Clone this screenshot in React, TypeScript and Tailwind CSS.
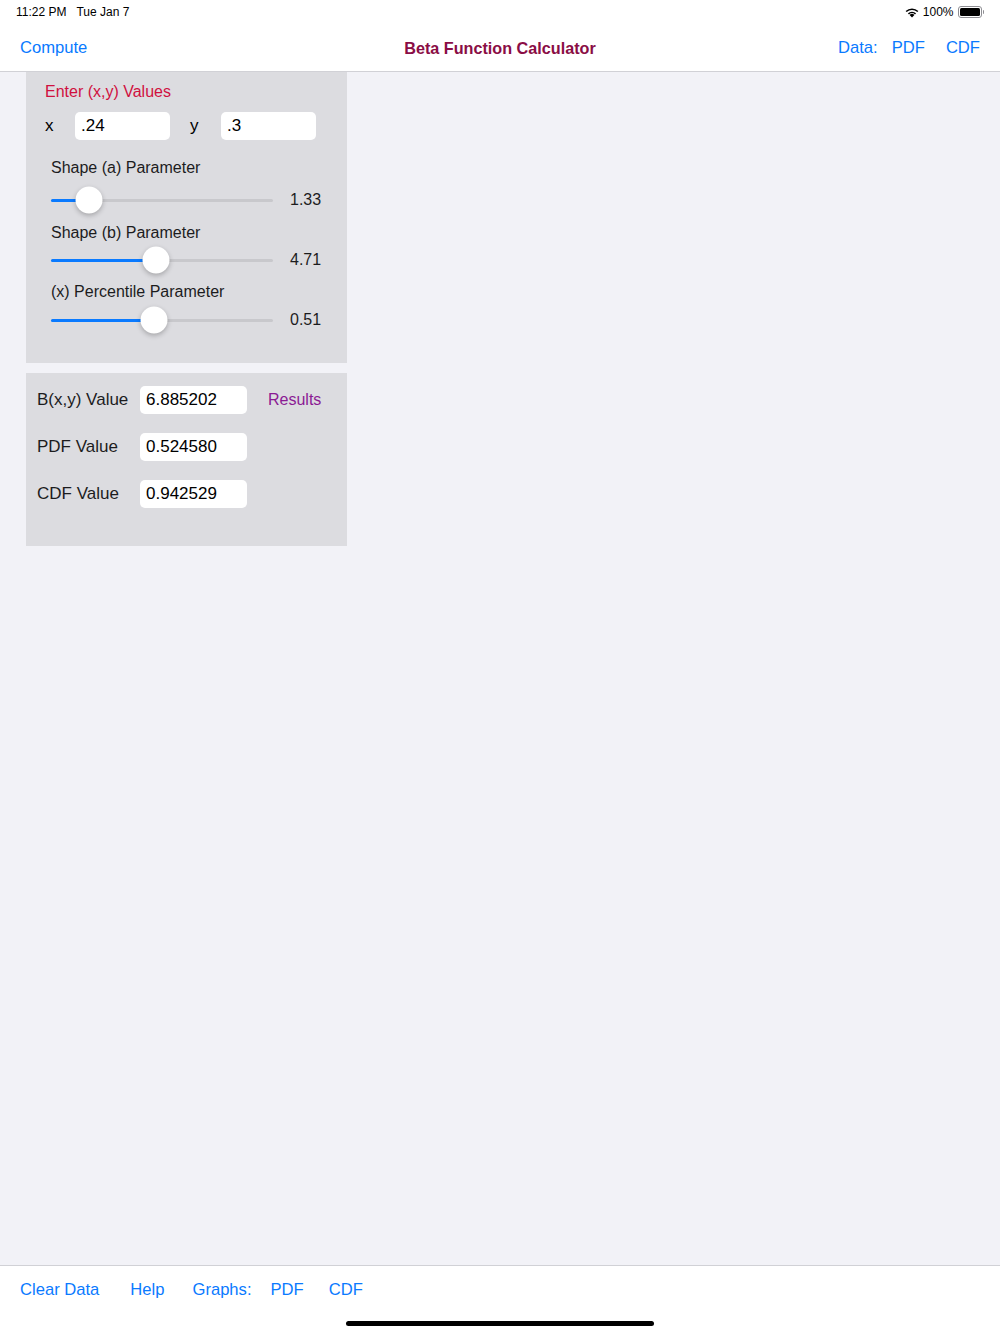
import React from "react";

const font = { fontFamily: '"Liberation Sans", Arial, sans-serif' };

function Slider({ pct, value }: { pct: number; value: string }) {
  return (
    <div className="flex items-center h-[30px]">
      <div className="relative w-[222px] h-[3px] rounded-full bg-[#c8c8cc]">
        <div
          className="absolute left-0 top-0 h-[3px] rounded-full bg-[#0a7aff]"
          style={{ width: `${pct}px` }}
        />
        <div
          className="absolute top-1/2 -translate-y-1/2 -translate-x-1/2 w-[27px] h-[27px] rounded-full bg-white shadow-[0_2px_5px_rgba(0,0,0,0.25)]"
          style={{ left: `${pct}px` }}
        />
      </div>
      <span className="ml-[17px] text-[16px] text-[#1c1c1e]">{value}</span>
    </div>
  );
}

function Field({ value, w }: { value: string; w: string }) {
  return (
    <div className={`${w} h-[28px] bg-white rounded-[5px] flex items-center px-[6px] text-[17px] text-black`}>
      {value}
    </div>
  );
}

export default function App() {
  return (
    <div style={font} className="w-[1000px] h-[1334px] bg-[#f2f2f7] flex flex-col overflow-hidden">
      {/* Status + Nav */}
      <div className="bg-white border-b border-[#d1d1d6]">
        <div className="h-[24px] flex items-center justify-between px-[16px] text-[12px] font-medium text-black">
          <div className="flex gap-[10px]">
            <span>11:22 PM</span>
            <span>Tue Jan 7</span>
          </div>
          <div className="flex items-center gap-[4px]">
            <svg width="14" height="11" viewBox="0 0 14 11">
              <path d="M7 10.5 L4.6 8 A3.4 3.4 0 0 1 9.4 8 Z" fill="black" />
              <path d="M2.9 6.3 A5.9 5.9 0 0 1 11.1 6.3 L10 7.4 A4.3 4.3 0 0 0 4 7.4 Z" fill="black" />
              <path d="M0.6 4 A9.2 9.2 0 0 1 13.4 4 L12.3 5.1 A7.6 7.6 0 0 0 1.7 5.1 Z" fill="black" />
            </svg>
            <span>100%</span>
            <div className="flex items-center">
              <div className="w-[24px] h-[12px] rounded-[3px] border border-[#8e8e93] p-[1px]">
                <div className="w-full h-full bg-black rounded-[1.5px]" />
              </div>
              <div className="w-[1.5px] h-[4px] bg-[#8e8e93] rounded-r-sm ml-[1px]" />
            </div>
          </div>
        </div>
        <div className="h-[47px] pt-[2px] flex items-center justify-between px-[20px] text-[16.6px] relative">
          <span className="text-[#0a7aff]">Compute</span>
          <span className="absolute left-1/2 -translate-x-1/2 text-[16.2px] font-bold text-[#8a0d45]">
            Beta Function Calculator
          </span>
          <div className="flex text-[#0a7aff]">
            <span>Data:</span>
            <span className="ml-[14px]">PDF</span>
            <span className="ml-[21px]">CDF</span>
          </div>
        </div>
      </div>

      {/* Content */}
      <div className="flex-1 pl-[26px]">
        <div className="w-[321px] h-[291px] bg-[#dcdce0] pt-[10px] pl-[19px]">
          <div className="text-[16px] text-[#d0103f] leading-[19px]">Enter (x,y) Values</div>
          <div className="flex items-center mt-[11px] text-[17px] text-black">
            <span className="w-[30px]">x</span>
            <Field value=".24" w="w-[95px]" />
            <span className="ml-[20px] w-[31px]">y</span>
            <Field value=".3" w="w-[95px]" />
          </div>
          <div className="pl-[6px] mt-[18px] text-[16px] text-[#1c1c1e]">
            <div className="leading-[19px]">Shape (a) Parameter</div>
            <div className="mt-[8px]">
              <Slider pct={38} value="1.33" />
            </div>
            <div className="leading-[19px] mt-[8px]">Shape (b) Parameter</div>
            <div className="mt-[3px]">
              <Slider pct={105} value="4.71" />
            </div>
            <div className="leading-[19px] mt-[7px]">(x) Percentile Parameter</div>
            <div className="mt-[4px]">
              <Slider pct={103} value="0.51" />
            </div>
          </div>
        </div>

        <div className="w-[321px] h-[173px] bg-[#dcdce0] mt-[10px] pt-[13px] pl-[11px] text-[17px] text-[#1c1c1e]">
          <div className="flex items-center h-[28px]">
            <span className="w-[103px]">B(x,y) Value</span>
            <Field value="6.885202" w="w-[107px]" />
            <span className="ml-[21px] text-[16px] text-[#8b1a94]">Results</span>
          </div>
          <div className="flex items-center h-[28px] mt-[19px]">
            <span className="w-[103px]">PDF Value</span>
            <Field value="0.524580" w="w-[107px]" />
          </div>
          <div className="flex items-center h-[28px] mt-[19px]">
            <span className="w-[103px]">CDF Value</span>
            <Field value="0.942529" w="w-[107px]" />
          </div>
        </div>
      </div>

      {/* Bottom toolbar */}
      <div className="h-[69px] bg-white border-t border-[#d1d1d6] flex flex-col">
        <div className="h-[48px] flex items-center px-[20px] text-[16.6px] text-[#0a7aff]">
          <span>Clear Data</span>
          <span className="ml-[31px]">Help</span>
          <span className="ml-[28px]">Graphs:</span>
          <span className="ml-[19px]">PDF</span>
          <span className="ml-[25px]">CDF</span>
        </div>
        <div className="flex justify-center mt-[7px]">
          <div className="w-[308px] h-[5px] rounded-full bg-black" />
        </div>
      </div>
    </div>
  );
}
